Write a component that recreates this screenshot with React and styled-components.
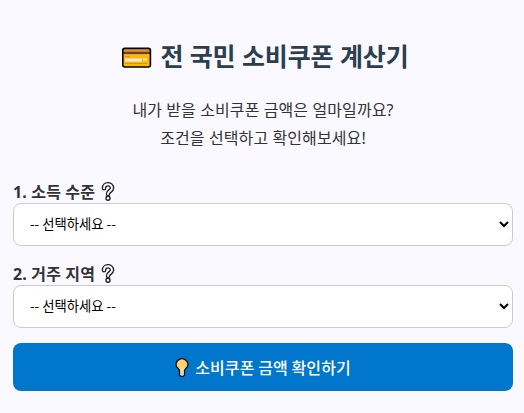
import React from "react";
import styled, { createGlobalStyle } from "styled-components";

const GlobalStyle = createGlobalStyle`
  * { box-sizing: border-box; }
  body {
    margin: 0;
    background: #f9f9ff;
    color: #333;
    font-family: "Noto Sans", "Noto Sans CJK KR", sans-serif;
    font-size: 16px;
    overflow: hidden;
  }
`;

const Page = styled.main`
  height: 413px;
  padding: 37px 11px 0 13px;
`;

const Title = styled.h1`
  display: flex;
  align-items: center;
  justify-content: center;
  gap: 8px;
  height: 39px;
  margin: 0;
  padding-left: 4px;
  color: #2c3e50;
  font-size: 25px;
  font-weight: 700;
  letter-spacing: -0.1px;
  line-height: 39px;
  white-space: nowrap;

  svg { margin-top: 3px; }
`;

const Intro = styled.p`
  margin: 20px 0 0;
  text-align: center;
  font-size: 16px;
  letter-spacing: 0.1px;
  line-height: 28px;
`;

const Field = styled.div`
  margin-top: ${(p) => p.$gap}px;
`;

const Label = styled.label`
  display: flex;
  align-items: center;
  gap: 6px;
  height: 24px;
  padding-top: 2px;
  font-weight: 700;
  letter-spacing: 0.15px;
  line-height: 24px;
`;

const Select = styled.select`
  display: block;
  width: 100%;
  height: 43px;
  padding: 0 0 2px 12px;
  border: 1px solid #ccc;
  border-radius: 8px;
  background: #fff;
  color: #000;
  font-family: "Noto Sans CJK KR", sans-serif;
  font-size: 13.333px;
`;

const Button = styled.button`
  display: flex;
  align-items: center;
  justify-content: center;
  gap: 6px;
  width: 100%;
  height: 48px;
  margin-top: 15px;
  padding: 0 0 1px;
  border: 0;
  border-radius: 8px;
  background: #0077cc;
  color: #fff;
  font-family: "Noto Sans CJK KR", sans-serif;
  font-size: 16px;
  font-weight: 500;
  letter-spacing: 0.1px;

  svg { margin-top: 3px; }
`;

const CardIcon = () => (
  <svg width="31" height="22" viewBox="0 0 31 22">
    <rect x="1.8" y="1.4" width="27.6" height="18.6" rx="2" fill="#ffb900" />
    <path d="M2 4.5h27v2.6H2z" fill="#6b3d36" />
    <path d="M2 2.4h27v2H2z" fill="#d8923c" />
    <path d="M4 9.5h5M4 16.5h22" stroke="#d98200" strokeWidth="0.8" />
    <path d="M4 11.5h17v3H4z" fill="#e6e8ea" />
    <path d="M22 11.5h4v2h-4z" fill="#f5e8c0" />
    <rect x="1.8" y="1.4" width="27.6" height="18.6" rx="2" fill="none" stroke="#000" strokeWidth="1.6" />
  </svg>
);

const HelpIcon = () => (
  <svg width="14" height="20" viewBox="0 0 14 20" fill="none">
    <path d="M3 6.2C3 1 11 1 11 6C11 9.2 7 8.8 7 12" stroke="#222" strokeWidth="4.6" strokeLinecap="round" />
    <circle cx="7" cy="16.2" r="2" fill="#fff" stroke="#222" strokeWidth="1.4" />
    <path d="M3 6.2C3 1 11 1 11 6C11 9.2 7 8.8 7 12" stroke="#fff" strokeWidth="1.9" strokeLinecap="round" />
  </svg>
);

const BulbIcon = () => (
  <svg width="14" height="20" viewBox="0 0 14 20">
    <path d="M4.5 13C4.5 10.5 1 10 1 6.7a6 6 0 0 1 12 0C13 10 9.5 10.5 9.5 13v4L8.3 18.3H5.7L4.5 17z" fill="#ffcf70" stroke="#111" strokeWidth="1.3" />
    <path d="M5.2 12.8h3.6v3.5L8 17.6H6l-.8-1.3z" fill="#ccd0d5" />
    <path d="M7 9v4" stroke="#fff0c0" />
  </svg>
);

function Choice({ label, gap }) {
  return (
    <Field $gap={gap}>
      <Label>{label}<HelpIcon /></Label>
      <Select aria-label={label}><option>-- 선택하세요 --</option></Select>
    </Field>
  );
}

export default function App() {
  return (
    <Page>
      <GlobalStyle />
      <Title><CardIcon />전 국민 소비쿠폰 계산기</Title>
      <Intro>내가 받을 소비쿠폰 금액은 얼마일까요?<br />조건을 선택하고 확인해보세요!</Intro>
      <Choice label="1. 소득 수준" gap={27} />
      <Choice label="2. 거주 지역" gap={15} />
      <Button><BulbIcon />소비쿠폰 금액 확인하기</Button>
    </Page>
  );
}
